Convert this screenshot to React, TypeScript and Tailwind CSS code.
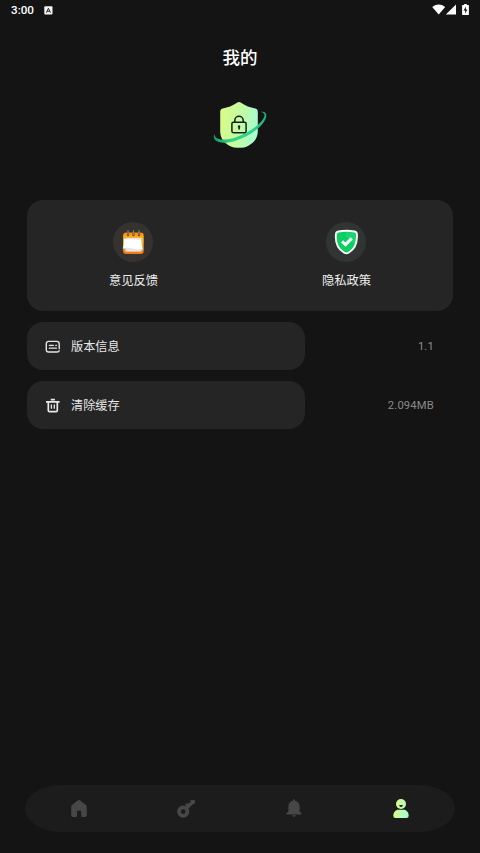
import * as React from "react";

function StatusBar() {
  return (
    <header className="flex h-5 items-center justify-between pl-[11px] pr-[11px]">
      <div className="flex items-center gap-[10px]">
        <span className="font-[Roboto] text-[11.7px] font-medium leading-5 text-white">3:00</span>
        <svg width="9" height="9" viewBox="0 0 9 9">
          <rect x="0.3" y="0.3" width="8.2" height="8.2" rx="1" fill="#f4f4f4" />
          <path d="M2.4 6.7 4.4 2.3 6.5 6.7M3.2 5.3h2.5" fill="none" stroke="#222" strokeWidth="1" />
        </svg>
      </div>
      <svg width="38" height="12" viewBox="0 0 38 12" className="mb-px">
        <path d="M1.2 2.9Q7.7-2 14.2 2.9L7.7 10.6Z" fill="#fff" />
        <path d="M25 .4V10.6H14.8Z" fill="#fff" />
        <path d="M31.6 .9h1.6V0h2.6v.9h1.6q.5 0 .5.5v9.2q0 .5-.5.5h-5.8q-.5 0-.5-.5V1.4q0-.5.5-.5Z" fill="#fff" />
        <path d="M34.9 2.5 32.6 6.4h1.6v3.1l2.2-3.9h-1.5Z" fill="#141414" />
      </svg>
    </header>
  );
}

function ShieldLogo() {
  return (
    <svg width="56" height="54" viewBox="0 0 56 54">
      <defs>
        <linearGradient id="shield" x1="0" y1="0.35" x2="1" y2="0.55">
          <stop offset="0" stopColor="#d9fb87" />
          <stop offset="0.5" stopColor="#c5fba0" />
          <stop offset="1" stopColor="#a5fbd2" />
        </linearGradient>
        <linearGradient id="orbit" x1="0" y1="0" x2="1" y2="0">
          <stop offset="0" stopColor="#159765" />
          <stop offset="0.35" stopColor="#35d48b" />
          <stop offset="0.75" stopColor="#2fcf8a" />
          <stop offset="1" stopColor="#1bb577" />
        </linearGradient>
      </defs>
      <path
        d="M25 4.7Q27 3.4 29 4.7C33.5 7.8 38 9.4 43.4 10.4Q45.8 10.9 45.8 13.4V33C45.8 40 42 45.4 35 48.4Q32.2 49.7 29 49.7H25Q21.8 49.7 19 48.4C12 45.4 8.2 40 8.2 33V13.4Q8.2 10.9 10.6 10.4C16 9.4 20.5 7.8 25 4.7Z"
        fill="url(#shield)"
      />
      <path
        d="M48.6 14C53.2 13 55.2 15.7 53.9 19.8C51.3 28.3 37 39 22.2 43.2C10.5 46.4 1 44.4 1.8 37.8L2.6 35.4C1.6 41.4 10.5 43 20.8 40.2C34.5 36.4 49.2 26.5 52.1 19.2C53.4 15.7 51.8 14.3 48.6 14Z"
        fill="url(#orbit)"
      />
      <g fill="none" stroke="#162019" strokeWidth="1.5">
        <rect x="19.9" y="24.3" width="14.2" height="10.4" rx="1.4" />
        <path d="M22.8 24V22.5a4.2 4.2 0 0 1 8.4 0V24" />
      </g>
      <path d="M27 27.3a1.4 1.4 0 0 1 .9 2.4v1.8h-1.6v-1.8A1.4 1.4 0 0 1 27 27.3Z" fill="#162019" />
    </svg>
  );
}

function CalendarIcon() {
  return (
    <svg width="24" height="26" viewBox="0 0 24 26">
      <defs>
        <linearGradient id="calendar" x1="0" y1="0" x2="0" y2="1">
          <stop offset="0" stopColor="#f58a0c" />
          <stop offset="0.35" stopColor="#ffc22e" />
          <stop offset="1" stopColor="#f37510" />
        </linearGradient>
      </defs>
      <rect x="2.1" y="3.5" width="20.6" height="21.5" rx="3" fill="url(#calendar)" />
      <path d="M4.5 9h15.8v13.6H4.5Z" fill="#e6e7e8" />
      <path d="M3.3 9.8C8.5 11.3 13.5 10 20 11.3L21.8 20.6C15.5 22 8.5 18.3 1.8 19.3 3.1 16 2.7 13 3.3 9.8Z" fill="#fff" />
      <path d="M1.8 19.3C8.5 18.3 15.5 22 21.8 20.6" fill="none" stroke="#d5d9dc" strokeWidth=".7" />
      <path d="M7 4.8v1.4M12.5 4.8v1.4M18 4.8v1.4" stroke="#894307" strokeWidth="2.2" strokeLinecap="round" />
      <path d="M7 1.5v4M12.5 1.5v4M18 1.5v4" stroke="#8a8580" strokeWidth="1.1" strokeLinecap="round" />
    </svg>
  );
}

function PrivacyIcon() {
  return (
    <svg width="24" height="26" viewBox="0 0 24 26">
      <path
        d="M4.2 2.5Q12.4 .9 20.6 2.5Q22.8 2.8 22.9 5.5C23.4 14 21.2 19.7 14.9 23.5Q12.4 25.2 9.9 23.5C3.4 19.7 1.2 14 1.9 5.5Q2.1 2.8 4.2 2.5Z"
        fill="#0ccf60"
        stroke="#fff"
        strokeWidth="1.9"
      />
      <path d="M12 3.4Q17 3.1 20.9 4.3C21.9 7 21.4 11 20.4 14.4L12 8Z" fill="#39e18a" opacity=".35" />
      <path d="m8.1 12.4 3.4 3.2 6.2-6.2" fill="none" stroke="#fff" strokeWidth="3" />
    </svg>
  );
}

function VersionIcon() {
  return (
    <svg width="16" height="14" viewBox="0 0 16 14" fill="none" stroke="#e5e5e5" strokeWidth="1.4" strokeLinecap="round">
      <path d="M14.2 8.8V3.7a2.3 2.3 0 0 0-2.3-2.3H3.6a2.3 2.3 0 0 0-2.3 2.3v6a2.3 2.3 0 0 0 2.3 2.3h7.8q2 0 2.8-1.2" />
      <path d="M4.3 5.3h4.2M10.7 5.3h.8M4.3 8.2h7.2" strokeWidth="1.2" />
    </svg>
  );
}

function TrashIcon() {
  return (
    <svg width="16" height="16" viewBox="0 0 16 16" fill="none" stroke="#e8e8e8" strokeWidth="1.7">
      <path d="M1 3.8h13.6M5.7 1.7h4.2M3.3 4.2v8.3q0 1.2 1.2 1.2h6.6q1.2 0 1.2-1.2V4.2" />
      <path d="M6.4 6.6v4.2M9.3 6.6v4.2" strokeWidth="1.3" />
    </svg>
  );
}

interface ShortcutProps {
  label: string;
  circle: string;
  children: React.ReactNode;
}

function Shortcut({ label, circle, children }: ShortcutProps) {
  return (
    <button className="flex flex-1 flex-col items-center pt-[22px]">
      <span className={`mr-px flex size-10 items-center justify-center rounded-full ${circle}`}>{children}</span>
      <span className="mt-2 text-[12.3px] leading-5 text-[#eeeeee]">{label}</span>
    </button>
  );
}

interface SettingRowProps {
  label: string;
  value: string;
  icon: React.ReactNode;
}

function SettingRow({ label, value, icon }: SettingRowProps) {
  return (
    <div className="flex h-12 items-center justify-between pr-[19px]">
      <div className="flex h-full w-[278px] items-center gap-[10px] rounded-2xl bg-[#252525] pl-[18px]">
        <span className="flex w-4 justify-center pt-px">{icon}</span>
        <span className="text-[12.2px] leading-5 text-[#e8e8e8]">{label}</span>
      </div>
      <span className="pt-[3px] font-[Roboto] text-[11.2px] tracking-[0.2px] text-[#8b8b8b]">{value}</span>
    </div>
  );
}

function BottomNav() {
  return (
    <nav className="mx-[25px] mb-[21px] flex h-[47px] items-center rounded-[36px/24px] bg-[#1c1c1c] text-[#474747]">
      <button className="flex flex-1 justify-center">
        <svg width="18" height="20" viewBox="0 0 18 20" fill="currentColor">
          <path d="M7.7 1.4Q9 .4 10.3 1.4L15.9 5.9Q16.8 6.6 16.8 7.7V16.2Q16.8 18 15 18H12Q11.2 18 11.2 17.2V12.7Q11.2 11.8 10.3 11.8H7.9Q7 11.8 7 12.7V17.2Q7 18 6.2 18H3Q1.2 18 1.2 16.2V7.7Q1.2 6.6 2.1 5.9Z" />
        </svg>
      </button>
      <button className="flex flex-1 justify-center">
        <svg width="20" height="20" viewBox="0 0 20 20" fill="none" stroke="currentColor">
          <circle cx="7.2" cy="12.6" r="4.2" strokeWidth="3.7" />
          <path d="m9.8 9.9 7.6-7.6" strokeWidth="3.2" />
          <path d="M9.6 4.4h4.2v4.2H9.6ZM14 .9h4.4q.6 0 .6.6v2.7l-2.4 1.2Z" fill="currentColor" stroke="none" />
        </svg>
      </button>
      <button className="flex flex-1 justify-center">
        <svg width="18" height="20" viewBox="0 0 18 20" fill="currentColor">
          <path d="M8 .8Q9-.2 10 .8V1.8C13.2 2.4 14.6 4.8 14.6 7.7V12.4L16.6 14.2Q17 15.5 15.7 15.5H2.3Q1 15.5 1.4 14.2L3.4 12.4V7.7C3.4 4.8 4.8 2.4 8 1.8Z" />
          <path d="M7.2 16.2h3.6q-.3 1.6-1.8 1.6t-1.8-1.6Z" />
        </svg>
      </button>
      <button className="flex flex-1 justify-center">
        <svg width="18" height="20" viewBox="0 0 18 20">
          <defs>
            <linearGradient id="profile" gradientUnits="userSpaceOnUse" x1="2" y1="12" x2="17" y2="15">
              <stop offset="0" stopColor="#dcfb85" />
              <stop offset="1" stopColor="#9dfbdc" />
            </linearGradient>
          </defs>
          <circle cx="9" cy="5" r="5" fill="url(#profile)" />
          <path d="M7.1 6h3.8Q10.6 8.1 9 8.1T7.1 6Z" fill="#1c1c1c" />
          <path d="M5.2 10.8h7.6C15.2 11.7 16.6 13.7 16.7 16.7Q16.7 19 14.4 19H3.6Q1.3 19 1.3 16.7C1.4 13.7 2.8 11.7 5.2 10.8Z" fill="url(#profile)" />
        </svg>
      </button>
    </nav>
  );
}

export default function App() {
  return (
    <div className="flex h-[853px] w-[480px] flex-col bg-[#141414] font-['Noto_Sans_CJK_SC',sans-serif]">
      <StatusBar />
      <h1 className="mt-6 text-center text-[17.5px] font-medium leading-[26px] text-white">我的</h1>
      <div className="mt-7 flex justify-center">
        <ShieldLogo />
      </div>
      <main className="mx-[27px] mt-12 flex-1">
        <section className="flex h-[111px] rounded-2xl bg-[#252525]">
          <Shortcut label="意见反馈" circle="bg-[#36322f]">
            <CalendarIcon />
          </Shortcut>
          <Shortcut label="隐私政策" circle="bg-[#303534]">
            <PrivacyIcon />
          </Shortcut>
        </section>
        <div className="mt-[11px] flex flex-col gap-[11px]">
          <SettingRow label="版本信息" value="1.1" icon={<VersionIcon />} />
          <SettingRow label="清除缓存" value="2.094MB" icon={<TrashIcon />} />
        </div>
      </main>
      <BottomNav />
    </div>
  );
}
